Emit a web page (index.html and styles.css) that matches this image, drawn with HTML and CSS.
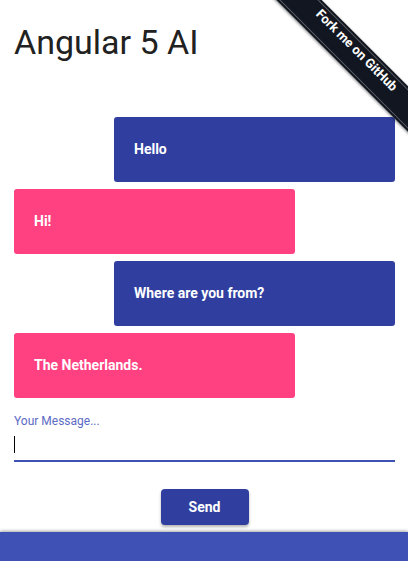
FILE: index.html
```html
<!DOCTYPE html>
<html lang="en">
<head>
<meta charset="utf-8">
<title>Angular 5 AI</title>
<link rel="stylesheet" href="styles.css">
</head>
<body>
<div class="page">
  <main class="content">
    <h1 class="title">Angular 5 AI</h1>
    <div class="messages">
      <div class="bubble bubble-me">Hello</div>
      <div class="bubble bubble-bot">Hi!</div>
      <div class="bubble bubble-me">Where are you from?</div>
      <div class="bubble bubble-bot">The Netherlands.</div>
    </div>
    <form class="composer">
      <label class="field">
        <span class="field-label">Your Message...</span>
        <span class="field-box">
          <input class="field-input" type="text">
          <span class="caret"></span>
        </span>
      </label>
      <div class="actions">
        <button class="send" type="button">Send</button>
      </div>
    </form>
  </main>
  <footer class="footer"></footer>
</div>
<a class="ribbon-wrap" href="#"><span class="ribbon">Fork me on GitHub</span></a>
</body>
</html>
```
FILE: styles.css
```css
html, body {
  margin: 0;
  padding: 0;
  height: 100%;
  overflow: hidden;
  background: #fff;
  font-family: Roboto, "Helvetica Neue", Arial, sans-serif;
}

.page {
  display: flex;
  flex-direction: column;
  min-height: 100%;
}

.content {
  padding: 0 13px 0 14px;
}

.title {
  margin: 23px 0 56px;
  font-size: 34px;
  line-height: 38px;
  font-weight: 400;
  color: #212121;
}

.messages {
  display: flex;
  flex-direction: column;
  gap: 7px;
}

.bubble {
  width: 281px;
  box-sizing: border-box;
  padding: 24px 20px;
  line-height: 17px;
  font-size: 14px;
  font-weight: 700;
  color: #fff;
  border-radius: 3px;
}

.bubble-me {
  align-self: flex-end;
  background: #303f9f;
}

.bubble-bot {
  align-self: flex-start;
  background: #ff4081;
}

.composer {
  margin: 15px 0 0;
}

.field {
  display: block;
}

.field-label {
  display: block;
  font-size: 12px;
  line-height: 16px;
  color: #5c6bc4;
}

.field-box {
  position: relative;
  display: block;
  margin-top: 4px;
  border-bottom: 2px solid #3f51b5;
  padding-bottom: 3px;
}

.field-input {
  display: block;
  width: 100%;
  box-sizing: border-box;
  height: 24px;
  border: 0;
  padding: 0;
  margin: 0;
  outline: none;
  background: transparent;
  font: 16px Roboto, sans-serif;
  caret-color: transparent;
}

.caret {
  position: absolute;
  left: 0;
  top: 3px;
  width: 1px;
  height: 17px;
  background: #000;
}

.actions {
  display: flex;
  justify-content: center;
  margin-top: 27px;
}

.send {
  width: 88px;
  height: 36px;
  border: 0;
  border-radius: 4px;
  background: #303f9f;
  color: #fff;
  font: 700 14px Roboto, sans-serif;
  box-shadow: 0 2px 3px rgba(0, 0, 0, 0.3);
}

.footer {
  margin-top: 7px;
  flex: 1;
  min-height: 29px;
  background: #3f51b5;
  box-shadow: 0 -1px 3px rgba(0, 0, 0, 0.35);
}

.ribbon-wrap {
  position: absolute;
  top: 0;
  right: 0;
  width: 150px;
  height: 150px;
  overflow: hidden;
  text-decoration: none;
}

.ribbon {
  position: absolute;
  left: -25px;
  top: 38px;
  width: 240px;
  height: 32px;
  line-height: 32px;
  box-sizing: border-box;
  padding-top: 3px;
  text-align: center;
  background: #121621;
  color: #fff;
  font: 700 13px Roboto, sans-serif;
  transform: rotate(45deg);
  box-shadow: 0 1px 3px rgba(0, 0, 0, 0.5);
}

.ribbon::before {
  content: "";
  position: absolute;
  left: 0;
  right: 0;
  top: 2px;
  bottom: 2px;
  border-top: 1px solid rgba(255, 255, 255, 0.3);
  border-bottom: 1px solid rgba(255, 255, 255, 0.3);
}
```
